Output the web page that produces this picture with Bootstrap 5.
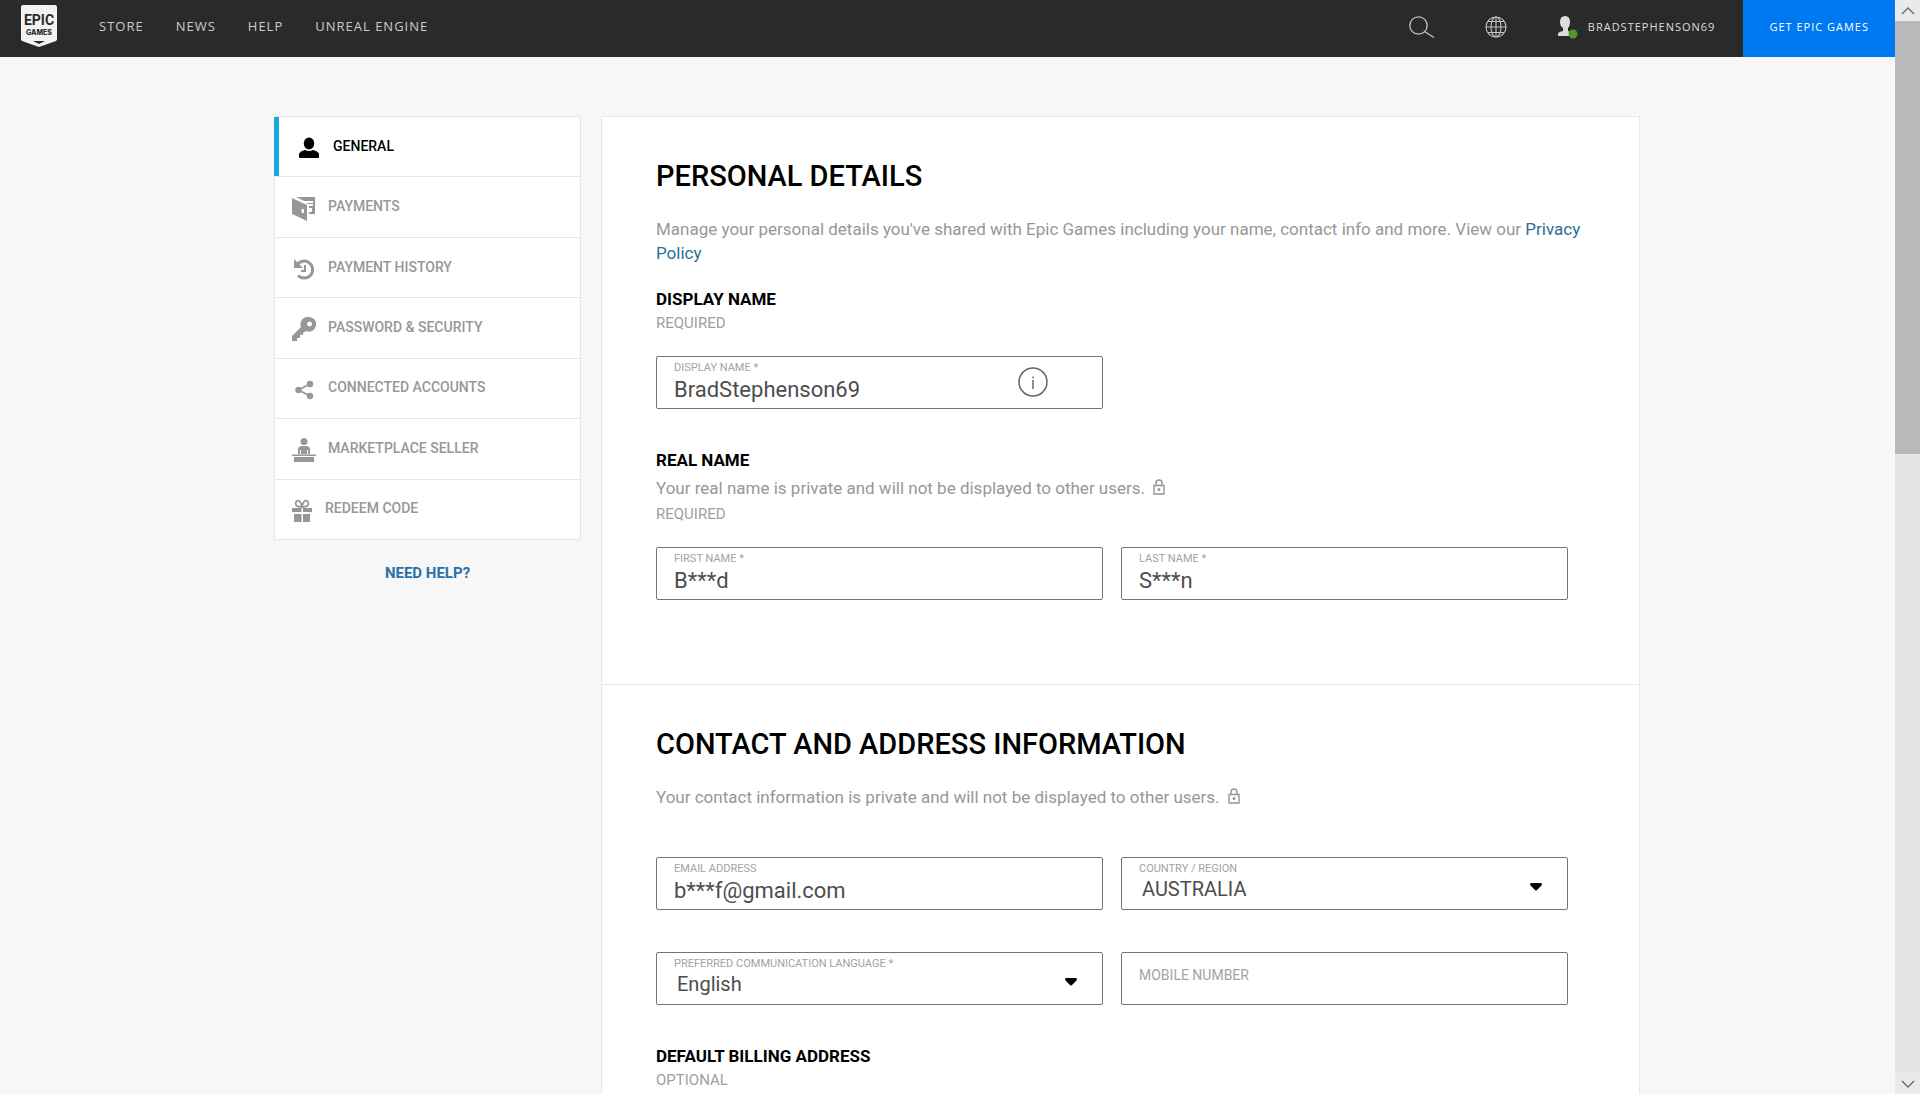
<!DOCTYPE html>
<html lang="en">
<head>
<meta charset="utf-8">
<meta name="viewport" content="width=device-width, initial-scale=1">
<title>Personal Details - Epic Games</title>
<link href="https://cdn.jsdelivr.net/npm/bootstrap@5.3.0/dist/css/bootstrap.min.css" rel="stylesheet">
<style>
  body { font-family: Roboto, "Liberation Sans", sans-serif; background: #f7f7f8; color: #000; }
  a { text-decoration: none; }
  .page-pane { overflow-y: auto; scrollbar-width: none; }
  .page-pane::-webkit-scrollbar { display: none; }

  /* Top bar */
  .site-bar { background: #2a2a2a; height: 57px; font-family: "Open Sans", "Noto Sans", sans-serif; letter-spacing: 1px; }
  .site-bar a, .site-bar button { line-height: 20px; }
  .brand-link { margin: 5px 42px 0 21px; }
  .main-links { gap: 32px; padding-top: 16px; }
  .main-links a { color: #ccc; font-size: 13px; }
  .tool-links { gap: 50px; padding: 16px 28px 0 0; }
  .icon-btn { background: none; border: 0; padding: 0; height: 22px; display: flex; }
  .user-link { color: #ddd; font-size: 11px; gap: 10px; }
  .get-btn { background: #0078f2; color: #fff; border: 0; border-radius: 0; font-size: 11px; padding: 0 26px 4px; letter-spacing: 1px; }

  /* Two column layout */
  .account-layout { padding: 59px 16px 0; gap: 20px; }
  .side-col { flex: 0 0 307px; }
  @media (min-width: 1400px) { .account-layout { padding-left: 274px; padding-right: 255px; } }

  .side-menu { background: #fff; border: 1px solid #e6e6e8; border-radius: 2px; height: 424px; }
  .side-menu a { padding: 0 0 1px 17px; gap: 12px; color: #979797; font-size: 14px; font-weight: 500; }
  .side-menu a + a { border-top: 1px solid #e6e6e8; }
  .side-menu a.current { color: #000; border-left: 5px solid #1ca8dd; margin-left: -1px; padding-left: 18px; }
  .side-menu svg { flex: none; margin-top: 4px; }
  .help-link { color: #2a70a8; font-size: 15px; font-weight: 700; line-height: 20px; margin-top: 23px; }

  .panel { background: #fff; border: 1px solid #e8e8ea; }
  .panel-part { padding: 41px 53px 84px 54px; }
  .panel-part + .panel-part { border-top: 1px solid #e8e8ea; }
  h1, h2 { font-size: 29px; line-height: 36px; font-weight: 500; margin: 0 0 23px; }
  .group-title { font-size: 17px; line-height: 24px; font-weight: 700; margin: 39px 0 0; }
  .intro + .group-title { margin-top: 22px; }
  .intro { font-size: 17px; line-height: 24px; color: #979797; margin: 0; }
  .intro a { color: #2a6f97; }
  .lock-mark { margin-left: 4px; vertical-align: -1px; }
  .need-note { font-size: 15px; line-height: 24px; color: #a0a0a0; margin: 0 0 21px; }
  .intro + .need-note { margin-top: 2px; }

  .field-grid { --bs-gutter-x: 18px; --bs-gutter-y: 42px; padding-right: 18px; }
  .field-box { height: 53px; border: 1px solid #757575; border-radius: 2px; padding: 5px 18px 0 17px; background: #fff; }
  .field-box label { display: block; font-size: 11px; line-height: 12px; color: #a3a3a3; }
  .field-box input, .field-box select { border: 0; padding: 0; width: 100%; background: transparent; outline: 0; color: #4d4d4d; font-size: 22px; line-height: 28px; height: 30px; display: block; }
  .field-box select { appearance: none; height: 28px; font-size: 20px; padding-left: 3px; padding-right: 40px; background: url("data:image/svg+xml,%3Csvg xmlns='http://www.w3.org/2000/svg' width='12' height='8'%3E%3Cpath d='M1 0h10q2 1 0 3L7 7q-1 1-2 0L1 3q-2-2 0-3z'/%3E%3C/svg%3E") no-repeat right 7px top 8px; }
  .field-box input.hint-only { font-size: 14px; height: 34px; }
  .hint-only::placeholder { color: #a3a3a3; opacity: 1; }
  .info-btn { background: none; border: 0; padding: 0; margin: 5px 36px 0 0; height: 30px; }

  /* Window scroll bar */
  .scroll-rail { flex: 0 0 25px; background: #e5e5e7; }
  .scroll-rail button { border: 0; background: #e9ebea; padding: 0; height: 21px; display: flex; align-items: center; justify-content: center; }
  .scroll-thumb { background: #b9b9ba; height: 39.6%; }
</style>
</head>
<body>
<div class="d-flex vh-100 overflow-hidden">
  <div class="page-pane flex-grow-1">
    <header class="site-bar d-flex">
      <a class="brand-link" href="#" aria-label="Epic Games home">
        <svg width="36" height="42" viewBox="0 0 36 42">
          <path fill="#f2f2f2" d="M2 0h32q2 0 2 2v32q0 1-1 2L18 42 1 36q-1-1-1-2V2q0-2 2-2z"/>
          <path fill="#2a2a2a" d="M12 36h12l-6 3z"/>
          <text x="18" y="20" text-anchor="middle" font-family="Roboto, sans-serif" font-weight="700" font-size="14" letter-spacing="0" fill="#2a2a2a">EPIC</text>
          <text x="18" y="30" text-anchor="middle" font-family="Inter, Roboto, sans-serif" font-weight="800" font-size="7" letter-spacing="0" fill="#2a2a2a">GAMES</text>
        </svg>
      </a>
      <nav class="main-links d-flex" aria-label="Main">
        <a href="#">STORE</a><a href="#">NEWS</a><a href="#">HELP</a><a href="#">UNREAL ENGINE</a>
      </nav>
      <div class="tool-links d-flex ms-auto">
        <button class="icon-btn" type="button" aria-label="Search">
          <svg width="26" height="22" viewBox="0 0 26 22" fill="none" stroke="#c4c4c4" stroke-width="1.3"><circle cx="9.500" cy="9.500" r="8.700"/><path d="M15.500 15.500 25 21.500"/></svg>
        </button>
        <button class="icon-btn" type="button" aria-label="Language">
          <svg width="22" height="22" viewBox="0 0 22 22" fill="none" stroke="#c4c4c4" stroke-width="1.100"><circle cx="11" cy="11" r="10"/><ellipse cx="11" cy="11" rx="5" ry="10"/><path d="M11 1v20M1 11h20M3 5.500h16M3 16.500h16"/></svg>
        </button>
        <a class="user-link d-flex" href="#">
          <svg width="21" height="24" viewBox="0 0 21 24"><path fill="#ddd" d="M8 0q5 0 5 6 0 4-2 6v3l5 2v3H1v-2q0-2 5-3v-3Q3 10 3 6q0-6 5-6z"/><circle cx="16" cy="18" r="4.500" fill="#4f9a26"/></svg>
          <span class="d-none d-md-inline lh-lg">BRADSTEPHENSON69</span>
        </a>
      </div>
      <button class="get-btn" type="button">GET EPIC GAMES</button>
    </header>

    <main class="account-layout d-flex flex-column flex-lg-row">
      <aside class="side-col">
        <nav class="side-menu d-flex flex-column" aria-label="Account">
          <a class="current d-flex flex-fill align-items-center" href="#"><svg width="24" height="24" viewBox="0 0 24 24" fill="currentColor"><ellipse cx="12" cy="7.500" rx="5.200" ry="6"/><path d="M2 21v-3q1-3 6-4 4 2 8 0 5 1 6 4v3q0 1-1 1H3q-1 0-1-1z"/></svg>GENERAL</a>
          <a class="d-flex flex-fill align-items-center" href="#"><svg width="24" height="24" viewBox="0 0 24 24" fill="currentColor"><path d="M0 1 15 8v16L0 17z"/><path d="M4 0h19v17h-6v-2h3v-4h-3V9h4V7h-5l-2-1h7V4h-9z"/><rect x="9.500" y="12" width="2.500" height="4" rx="1" fill="#fff"/></svg>PAYMENTS</a>
          <a class="d-flex flex-fill align-items-center" href="#"><svg width="24" height="24" viewBox="0 0 24 24" fill="none" stroke="currentColor"><path stroke-width="3" d="M5 8a8.500 8.500 0 1 1 1 10.500"/><path stroke-width="2" d="M13 8v6H9"/><path fill="currentColor" stroke="none" d="M2 2v9h9z"/></svg>PAYMENT HISTORY</a>
          <a class="d-flex flex-fill align-items-center" href="#"><svg width="24" height="24" viewBox="0 0 24 24" fill="currentColor"><path fill-rule="evenodd" d="M17 0a7.300 7.300 0 1 1-3 14l-3 2v2H8v3H5v3H0v-5l9-9a7.300 7.300 0 0 1 8-10zm.5 4.500a2.500 2.500 0 1 0 .01 5 2.500 2.500 0 0 0 0-5z"/></svg>PASSWORD &amp; SECURITY</a>
          <a class="d-flex flex-fill align-items-center" href="#"><svg width="24" height="24" viewBox="0 0 24 24" fill="currentColor"><circle cx="6.500" cy="12" r="3.200"/><circle cx="18" cy="6" r="3.200"/><circle cx="18" cy="18" r="3.200"/><path fill="none" stroke="currentColor" stroke-width="1.800" d="M18 6 6.500 12 18 18"/></svg>CONNECTED ACCOUNTS</a>
          <a class="d-flex flex-fill align-items-center" href="#"><svg width="24" height="24" viewBox="0 0 24 24" fill="currentColor"><circle cx="12" cy="3.500" r="3.500"/><path d="M6 16v-4q0-4 4-4h4q4 0 4 4v4h-2v-4h-1v4H9v-4H8v4z"/><path d="M0 16.500h24V18H0zM2 19h20v5H2z"/></svg>MARKETPLACE SELLER</a>
          <a class="d-flex flex-fill align-items-center" href="#"><svg width="21" height="24" viewBox="0 0 21 24" fill="currentColor"><path d="M0 9h9.500v4H0zM11 9h9v4h-9zM2 15h7.500v8H2zM11 15h7v8h-7z"/><path fill="none" stroke="currentColor" stroke-width="1.800" d="M10 8C4 8 3 6 4 3c2-3 5-1 6 5 1-6 4-8 6-5 1 3 0 5-6 5z"/></svg>REDEEM CODE</a>
        </nav>
        <a class="help-link d-block text-center" href="#">NEED HELP?</a>
      </aside>

      <form class="panel flex-grow-1">
        <section class="panel-part">
          <h1>PERSONAL DETAILS</h1>
          <p class="intro">Manage your personal details you've shared with Epic Games including your name, contact info and more. View our <a href="#">Privacy Policy</a></p>
          <h3 class="group-title">DISPLAY NAME</h3>
          <p class="need-note">REQUIRED</p>
          <div class="row field-grid">
            <div class="col-12 col-md-6">
              <div class="field-box d-flex">
                <div class="flex-grow-1">
                  <label for="displayName">DISPLAY NAME *</label>
                  <input id="displayName" type="text" value="BradStephenson69">
                </div>
                <button class="info-btn" type="button" aria-label="About display names">
                  <svg class="d-block" width="30" height="30" viewBox="0 0 30 30" fill="none" stroke="#666" stroke-width="1.500"><circle cx="15" cy="15" r="14"/><path d="M15 13v9M15 9.500v1.700"/></svg>
                </button>
              </div>
            </div>
          </div>
          <h3 class="group-title">REAL NAME</h3>
          <p class="intro mt-1">Your real name is private and will not be displayed to other users.
            <svg class="lock-mark" width="12" height="16" viewBox="0 0 12 16" fill="none" stroke="#949494" stroke-width="1.400"><path d="M1 6.500h10V15H1zM3 6.500V4q0-3 3-3t3 3v2.500"/><circle cx="6" cy="10.500" r=".8" fill="#949494"/></svg></p>
          <p class="need-note">REQUIRED</p>
          <div class="row field-grid">
            <div class="col-12 col-md-6"><div class="field-box"><label for="firstName">FIRST NAME *</label><input id="firstName" type="text" value="B***d"></div></div>
            <div class="col-12 col-md-6"><div class="field-box"><label for="lastName">LAST NAME *</label><input id="lastName" type="text" value="S***n"></div></div>
          </div>
        </section>

        <section class="panel-part">
          <h2>CONTACT AND ADDRESS INFORMATION</h2>
          <p class="intro mb-5">Your contact information is private and will not be displayed to other users.
            <svg class="lock-mark" width="12" height="16" viewBox="0 0 12 16" fill="none" stroke="#949494" stroke-width="1.400"><path d="M1 6.500h10V15H1zM3 6.500V4q0-3 3-3t3 3v2.500"/><circle cx="6" cy="10.500" r=".8" fill="#949494"/></svg></p>
          <div class="row field-grid">
            <div class="col-12 col-md-6"><div class="field-box"><label for="email">EMAIL ADDRESS</label><input id="email" type="text" value="b***f@gmail.com"></div></div>
            <div class="col-12 col-md-6"><div class="field-box"><label for="country">COUNTRY / REGION</label><select id="country"><option>AUSTRALIA</option></select></div></div>
            <div class="col-12 col-md-6"><div class="field-box"><label for="language">PREFERRED COMMUNICATION LANGUAGE *</label><select id="language"><option>English</option></select></div></div>
            <div class="col-12 col-md-6"><div class="field-box"><input class="hint-only" type="tel" aria-label="Mobile number" placeholder="MOBILE NUMBER"></div></div>
          </div>
          <h3 class="group-title">DEFAULT BILLING ADDRESS</h3>
          <p class="need-note">OPTIONAL</p>
        </section>
      </form>
    </main>
  </div>

  <div class="scroll-rail d-flex flex-column">
    <button type="button" aria-label="Scroll up"><svg width="14" height="8" viewBox="0 0 14 8" fill="none" stroke="#666" stroke-width="1.300"><path d="m1 7 6-6 6 6"/></svg></button>
    <div class="scroll-thumb"></div>
    <button class="mt-auto" type="button" aria-label="Scroll down"><svg width="14" height="8" viewBox="0 0 14 8" fill="none" stroke="#666" stroke-width="1.300"><path d="m1 1 6 6 6-6"/></svg></button>
  </div>
</div>
<script src="https://cdn.jsdelivr.net/npm/bootstrap@5.3.0/dist/js/bootstrap.bundle.min.js"></script>
</body>
</html>
